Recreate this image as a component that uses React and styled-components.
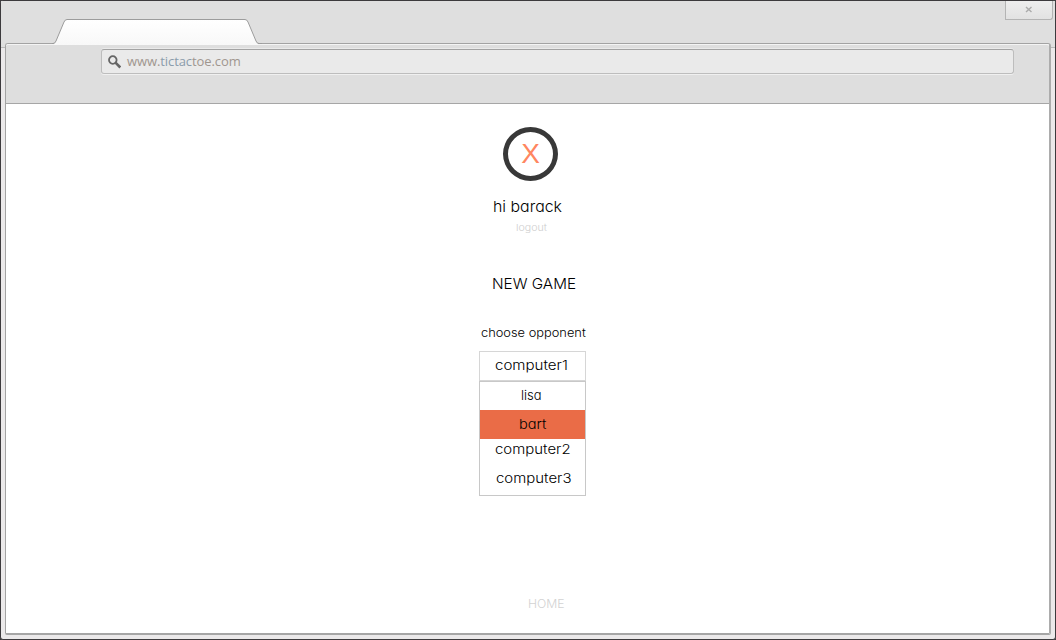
import React from "react";
import styled, { createGlobalStyle } from "styled-components";

const GlobalStyle = createGlobalStyle`
  * { box-sizing: border-box; }
  html, body { margin: 0; height: 100%; overflow: hidden; background: #3c3a3d; }
`;

const BrowserWindow = styled.div`
  display: flex;
  flex-direction: column;
  width: 1056px;
  height: 640px;
  border: 1px solid #3c3a3d;
  border-radius: 3px;
  background: #ebe9ea;
`;

const TitleBar = styled.header`
  position: relative;
  display: flex;
  justify-content: flex-end;
  flex: none;
  height: 47px;
  margin-bottom: -5px;
  padding-right: 2px;
  background: #dfdfdf;
  border-bottom: 1px solid #b9b9b9;
`;

const CloseButton = styled.button`
  display: flex;
  align-items: center;
  justify-content: center;
  width: 48px;
  height: 19px;
  padding: 0 0 1px;
  border: 1px solid #b4b4b4;
  border-top: 0;
  border-radius: 0 0 3px 0;
  background: linear-gradient(#eeeeee, #e2e2e2);
`;

const TabShape = styled.svg`
  position: absolute;
  z-index: 2;
  left: 49px;
  top: 17px;
`;

const Viewport = styled.div`
  position: relative;
  z-index: 1;
  display: flex;
  flex-direction: column;
  flex: 1;
  margin: 0 4px 4px 4px;
  border: 1px solid #a3a3a3;
  border-right: 2px solid #acacac;
  border-bottom: 2px solid #a6a6a6;
  border-radius: 3px 3px 2px 2px;
  background: #fff;
`;

const Toolbar = styled.div`
  flex: none;
  height: 60px;
  padding: 5px 35px 0 95px;
  border-bottom: 1px solid #a6a6a6;
  border-top: 1px solid #f4f4f4;
  border-radius: 2px 2px 0 0;
  background: #dedede;
`;

const AddressBar = styled.div`
  display: flex;
  align-items: center;
  height: 25px;
  margin-top: -1px;
  padding: 0 0 0 6px;
  border: 1px solid #bdbdbd;
  border-top-color: #a3a3a3;
  border-radius: 3px;
  background: #eaeaea;
  box-shadow: 0 1px 0 #f0f0f0, 0 -1px 0 #eaeaea;
`;

const Url = styled.span`
  margin: -2px 0 0 6px;
  font: 13px/20px "Open Sans", "Noto Sans", sans-serif;
  letter-spacing: -0.09px;
  color: #a0968f;
  em { font-style: normal; color: #8b9cab; }
`;

const Page = styled.main`
  display: flex;
  flex-direction: column;
  align-items: flex-start;
  padding: 23px 0 0 473px;
`;

const Logo = styled.div`
  display: flex;
  align-items: center;
  justify-content: center;
  width: 55px;
  height: 54px;
  margin-left: 24px;
  border: 5px solid #383838;
  border-radius: 50%;
  font: 28px/1 "Liberation Sans", sans-serif;
  color: #ff8660;
`;

const Label = styled.div`
  width: ${(p) => p.$width}px;
  margin: ${(p) => p.$gap || 0}px 0 0 ${(p) => p.$indent}px;
  font-family: Inter, "Liberation Sans", sans-serif;
  font-feature-settings: "cv11";
  font-weight: ${(p) => p.$weight || 350};
  font-size: ${(p) => p.$size}px;
  line-height: 20px;
  white-space: nowrap;
  transform: scaleX(${(p) => p.$stretch || 1});
  transform-origin: left;
  color: ${(p) => p.$color || "#000"};
`;

const Selected = styled.div`
  width: 107px;
  height: 30px;
  margin-top: 8px;
  padding-top: 3px;
  border: 1px solid #d6d6d6;
`;

const Options = styled.div`
  width: 107px;
  height: 115px;
  border: 1px solid #c8c8c8;
`;

const Option = styled.div`
  height: ${(p) => p.$height || 29}px;
  padding-top: ${(p) => p.$top}px;
  background: ${(p) => (p.$active ? "#ea6c47" : "transparent")};
`;

export default function App() {
  return (
    <>
      <GlobalStyle />
      <BrowserWindow>
        <TitleBar>
          <TabShape width="214" height="28" viewBox="0 0 214 28">
            <defs>
              <linearGradient id="tabFill" x1="0" y1="0" x2="0" y2="1">
                <stop offset="0" stopColor="#fff" />
                <stop offset="1" stopColor="#f8f8f8" />
              </linearGradient>
            </defs>
            <path d="M4 27V25.5Q5.5 25 6 23L14 4Q15 1.5 17 1.5H195Q197 1.5 198 4L206 23Q206.5 25 208 25.5V27Z" fill="url(#tabFill)" />
            <path d="M2 25.5H3Q5 25.5 6 23L14 4Q15 1.5 17 1.5H195Q197 1.5 198 4L206 23Q207 25.5 209 25.5H212" fill="none" stroke="#9c9c9c" />
          </TabShape>
          <CloseButton aria-label="Close">
            <svg width="8" height="7" viewBox="0 0 8 7">
              <path d="M1 1L6.5 6M6.5 1L1 6" stroke="#ababab" strokeWidth="1.4" />
            </svg>
          </CloseButton>
        </TitleBar>
        <Viewport>
          <Toolbar>
            <AddressBar>
              <svg width="13" height="14" viewBox="0 0 13 14">
                <circle cx="4.8" cy="5" r="3.8" fill="none" stroke="#666" strokeWidth="1.8" />
                <path d="M7.5 7.7L12.3 12.5" stroke="#666" strokeWidth="2.6" />
              </svg>
              <Url>www.<em>tictac</em>toe.com</Url>
            </AddressBar>
          </Toolbar>
          <Page>
            <Logo>X</Logo>
            <Label $width={70} $indent={14} $gap={16} $size={15} $stretch={1.06}>hi barack</Label>
            <Label $width={32} $indent={37} $gap={1} $size={9.5} $stretch={1.12} $color="#cfcfcf">logout</Label>
            <Label $width={85} $indent={13} $gap={36} $size={15} $weight={300} $stretch={1.02}>NEW GAME</Label>
            <Label $width={106} $indent={2} $gap={29} $size={12} $stretch={1.07}>choose opponent</Label>
            <Selected><Label $width={75} $indent={15} $size={13} $stretch={1.16}>computer1</Label></Selected>
            <Options>
              <Option $top={3} $height={28}><Label $width={22} $indent={41} $size={13.5} $stretch={0.96}>lisa</Label></Option>
              <Option $top={4} $active><Label $width={28} $indent={39} $size={13.5} $stretch={1.08}>bart</Label></Option>
              <Option $top={0}><Label $width={76} $indent={15} $size={13} $stretch={1.15}>computer2</Label></Option>
              <Option $top={0} $height={27}><Label $width={76} $indent={16} $size={13} $stretch={1.15}>computer3</Label></Option>
            </Options>
            <Label $width={38} $indent={49} $gap={98} $size={12} $stretch={1.02} $weight={300} $color="#d2d2d2">HOME</Label>
          </Page>
        </Viewport>
      </BrowserWindow>
    </>
  );
}
